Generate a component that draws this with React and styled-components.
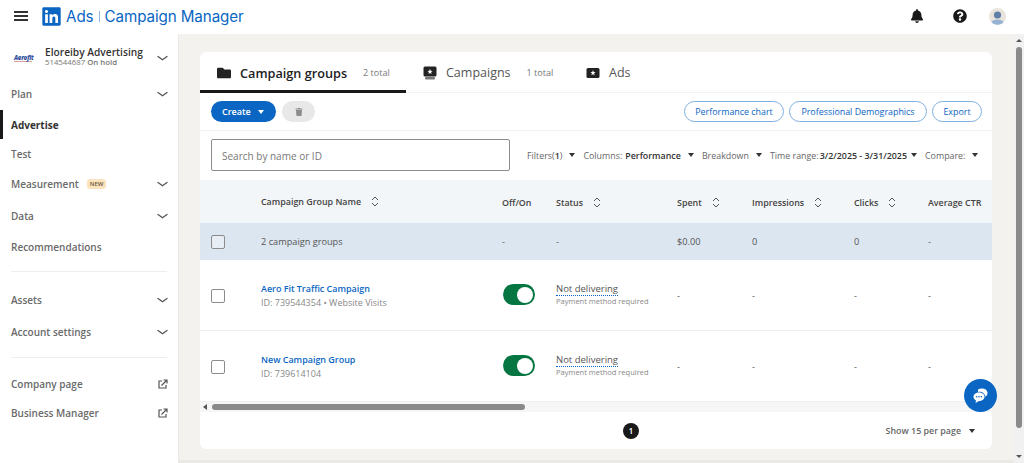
import React from 'react'
import styled, { createGlobalStyle } from 'styled-components'
import { FaLinkedin, FaFolder, FaBell, FaQuestionCircle, FaTrash } from 'react-icons/fa'

const GlobalStyle = createGlobalStyle`
  html, body { margin: 0; padding: 0; height: 100%; overflow: hidden; }
  body { font-family: "Open Sans", "Noto Sans", "Liberation Sans", sans-serif; color: #333; background: #f4f2ee; }
  * { box-sizing: border-box; }
`

const Page = styled.div`
  width: 1024px;
  height: 463px;
  display: flex;
  flex-direction: column;
  overflow: hidden;
`

const Header = styled.header`
  height: 34px;
  flex: none;
  background: #fff;
  display: flex;
  align-items: center;
  padding: 0 18px 2px 14px;
`

const Burger = styled.div`
  width: 14px;
  height: 10px;
  margin-right: 13px;
  border-top: 2px solid #333;
  border-bottom: 2px solid #333;
  display: flex;
  align-items: center;
  &::before { content: ''; width: 100%; height: 2px; background: #333; }
`

const Brand = styled.div`
  display: flex;
  align-items: center;
  color: #0a66c2;
  font-size: 15.2px;
  font-family: "Inter", "Open Sans", sans-serif;
  letter-spacing: -0.1px;
  svg { width: 21px; height: 21px; margin-right: 4px; }
`

const BrandBar = styled.span`
  width: 1px;
  height: 11px;
  background: #8db6e0;
  margin: 0 5px;
`

const HeaderIcons = styled.div`
  margin-left: auto;
  display: flex;
  align-items: center;
  gap: 22px;
  color: #191919;
  svg:first-child { margin-right: 7px; }
`

const Body = styled.div`
  flex: 1;
  min-height: 0;
  display: flex;
`

const Sidebar = styled.aside`
  width: 179px;
  flex: none;
  background: #fff;
  border-right: 1px solid #ebe9e5;
`

const Account = styled.div`
  height: 44px;
  display: flex;
  align-items: center;
  padding: 1px 10px 0 14px;
  > svg { margin-top: 4px; }
`

const AccountLogo = styled.span`
  width: 18px;
  font-size: 6px;
  font-weight: 800;
  font-style: italic;
  color: #30509c;
  margin: 4px 13px 0 0;
  letter-spacing: -0.2px;
  border-bottom: 1px solid #d8a0a0;
  line-height: 6px;
`

const AccountText = styled.div`
  flex: 1;
  min-width: 0;
`

const AccountName = styled.div`
  font-size: 10.2px;
  font-weight: 600;
  line-height: 12px;
  color: #333;
  white-space: nowrap;
`

const AccountMeta = styled.div`
  font-size: 7.8px;
  line-height: 9px;
  color: #777;
  b { font-weight: 600; }
`

const NavItem = styled.div`
  height: ${p => (p.$tall ? 32 : 29)}px;
  display: flex;
  align-items: center;
  padding: 0 10px 0 11px;
  font-size: 10px;
  font-weight: ${p => (p.$active ? 700 : 600)};
  color: ${p => (p.$active ? '#333' : '#6a6a6a')};
  box-shadow: ${p => (p.$active ? 'inset 3px 0 0 #191919' : 'none')};
  svg { margin-left: auto; }
`

const NavDivider = styled.hr`
  border: 0;
  border-top: 1px solid #eeeeee;
  margin: ${p => p.$before}px 11px ${p => p.$after}px;
`

const NewBadge = styled.span`
  margin-left: 8px;
  background: #fbe3bd;
  color: #6b5a3e;
  font-size: 6px;
  font-weight: 600;
  padding: 1px 3px;
  line-height: 8px;
  border-radius: 3px;
`

const Main = styled.main`
  flex: 1;
  min-width: 0;
  padding: 18px 22px 0 21px;
  border-bottom: 3px solid #ebe9e5;
`

const Card = styled.section`
  width: 792px;
  height: 397px;
  background: #fff;
  border-radius: 6px;
  overflow: hidden;
  display: flex;
  flex-direction: column;
`

const Tabs = styled.div`
  height: 41px;
  flex: none;
  display: flex;
  border-bottom: 1px solid #f2f2f2;
`

const Tab = styled.div`
  display: flex;
  align-items: center;
  height: 41px;
  width: ${p => p.$w}px;
  padding-left: ${p => p.$pad}px;
  padding-top: ${p => (p.$active ? 3 : 0)}px;
  font-size: ${p => (p.$active ? 12.7 : 12.5)}px;
  font-weight: ${p => (p.$active ? 600 : 400)};
  color: ${p => (p.$active ? '#222' : '#555')};
  border-bottom: ${p => (p.$active ? '3px solid #191919' : 'none')};
  svg { margin-right: 9px; color: #222; flex: none; }
`

const TabCount = styled.span`
  font-size: 9px;
  font-weight: 400;
  color: #777;
  margin-left: 16px;
`

const Toolbar = styled.div`
  height: 38px;
  flex: none;
  display: flex;
  align-items: center;
  padding: 0 10px 0 11px;
  gap: 6px;
  border-bottom: 1px solid #f2f2f2;
`

const CreateButton = styled.div`
  width: 65px;
  height: 21px;
  background: #0a66c2;
  color: #fff;
  border-radius: 11px;
  font-size: 9px;
  font-weight: 600;
  display: flex;
  align-items: center;
  padding-left: 11px;
  gap: 7px;
`

const TrashButton = styled.div`
  width: 33px;
  height: 21px;
  background: #e8e8e8;
  border-radius: 11px;
  color: #8c8c8c;
  display: flex;
  align-items: center;
  justify-content: center;
`

const OutlineRow = styled.div`
  margin-left: auto;
  display: flex;
  gap: 5px;
`

const OutlineButton = styled.div`
  width: ${p => p.$w}px;
  height: 21px;
  border: 1px solid #7fb0e0;
  border-radius: 11px;
  color: #0a66c2;
  font-size: 8.9px;
  font-weight: 500;
  display: flex;
  align-items: center;
  justify-content: center;
  white-space: nowrap;
`

const FilterRow = styled.div`
  height: 49px;
  flex: none;
  display: flex;
  align-items: center;
  padding: 0 0 1px 11px;
  white-space: nowrap;
`

const SearchBox = styled.div`
  width: 299px;
  height: 32px;
  flex: none;
  border: 1px solid #8c8c8c;
  border-radius: 2px;
  padding: 2px 0 0 10px;
  display: flex;
  align-items: center;
  font-size: 10px;
  color: #777;
  margin-right: 17px;
`

const Filter = styled.span`
  font-size: 8.9px;
  color: #666;
  display: inline-flex;
  align-items: center;
  margin-right: ${p => p.$after ?? 8}px;
  b { font-weight: 600; color: #333; margin-left: ${p => p.$bold ?? 3}px; }
`

const FilterCount = styled.span`
  font-weight: 600;
  color: #333;
`

const Caret = styled.span`
  width: 0;
  height: 0;
  margin-left: ${p => p.$gap ?? 7}px;
  border-left: 3.5px solid transparent;
  border-right: 3.5px solid transparent;
  border-top: 4px solid ${p => p.$color || '#333'};
`

const Row = styled.div`
  flex: none;
  height: ${p => p.$h}px;
  display: grid;
  grid-template-columns: 61px 241px 54px 121px 75px 102px 74px 64px;
  align-items: center;
  background: ${p => p.$bg || '#fff'};
  border-bottom: ${p => (p.$line ? '1px solid #f0f0f0' : 'none')};
  font-size: 9.2px;
  color: #555;
`

const HeadCell = styled.div`
  display: flex;
  align-items: center;
  font-weight: 600;
  color: #444;
  font-size: 8.9px;
  white-space: nowrap;
  padding-top: ${p => p.$drop || 0}px;
  svg { margin-left: 10px; }
`

const Check = styled.div`
  width: 14px;
  height: 14px;
  margin: 1px 0 0 11px;
  border: 1px solid #8c8c8c;
  border-radius: 2px;
  background: ${p => (p.$tint ? '#e6edf5' : '#fff')};
`

const NameCell = styled.div`
  padding-top: 1px;
`

const NameLink = styled.div`
  color: #0a66c2;
  font-weight: 600;
  font-size: 8.95px;
  line-height: 14px;
`

const SubLine = styled.div`
  color: #888;
  font-size: 9px;
  line-height: 14px;
`

const Toggle = styled.div`
  width: 32px;
  height: 21px;
  margin: -1px 0 0 1px;
  background: #057642;
  border-radius: 11px;
  display: flex;
  align-items: center;
  justify-content: flex-end;
  padding-right: 2px;
  &::after { content: ''; width: 16px; height: 16px; background: #fff; border-radius: 50%; }
`

const StatusLabel = styled.div`
  color: #555;
  font-weight: 500;
  font-size: 9.5px;
  line-height: 12px;
  width: fit-content;
  border-bottom: 1px dotted #0a66c2;
`

const StatusNote = styled.div`
  color: #888;
  font-size: 7.5px;
  line-height: 11px;
  white-space: nowrap;
`

const HScroll = styled.div`
  height: 10px;
  flex: none;
  background: #f6f6f6;
  display: flex;
  align-items: center;
  padding-left: 3px;
`

const ScrollArrowLeft = styled.span`
  width: 0;
  height: 0;
  border-top: 3px solid transparent;
  border-bottom: 3px solid transparent;
  border-right: 4px solid #555;
  margin-right: 5px;
`

const HThumb = styled.div`
  width: 313px;
  height: 6px;
  border-radius: 3px;
  background: #8a8a8a;
`

const Footer = styled.div`
  flex: 1;
  display: grid;
  grid-template-columns: 423px auto 1fr;
  align-items: center;
  padding: 0 17px 0 0;
`

const PageDot = styled.div`
  grid-column: 2;
  width: 16px;
  height: 16px;
  background: #191919;
  color: #fff;
  border-radius: 50%;
  font-size: 8.5px;
  font-weight: 600;
  display: flex;
  align-items: center;
  justify-content: center;
`

const PerPage = styled.div`
  justify-self: end;
  display: flex;
  align-items: center;
  font-size: 8.9px;
  font-weight: 600;
  color: #666;
`

const VScroll = styled.div`
  width: 10px;
  flex: none;
  background: #f1f1f1;
  display: flex;
  flex-direction: column;
  align-items: center;
  padding-top: 5px;
`

const VArrow = styled.span`
  width: 0;
  height: 0;
  border-left: 3px solid transparent;
  border-right: 3px solid transparent;
  ${p => (p.$down ? 'border-top: 3px solid #555;' : 'border-bottom: 3px solid #555;')}
`

const VThumb = styled.div`
  width: 6px;
  height: 381px;
  margin: 5px 0 27px;
  border-radius: 3px;
  background: #8a8a8a;
`

const ChatFab = styled.div`
  position: fixed;
  left: 964px;
  top: 379px;
  width: 33px;
  height: 33px;
  border-radius: 50%;
  background: #0a66c2;
  display: flex;
  align-items: center;
  justify-content: center;
`

const Chevron = () => (
  <svg width="11" height="7" viewBox="0 0 11 7" fill="none">
    <path d="M1 1.4 L5.5 4.8 L10 1.4" stroke="#555" strokeWidth="1.3" strokeLinecap="round" />
  </svg>
)

const Sort = () => (
  <svg width="8" height="11" viewBox="0 0 8 11" fill="none">
    <path d="M1 4 L4 1 L7 4 M1 7 L4 10 L7 7" stroke="#555" strokeWidth="1" />
  </svg>
)

const External = () => (
  <svg width="10" height="10" viewBox="0 0 10 10" fill="none">
    <path d="M4 2 H1 V9 H8 V6" stroke="#555" strokeWidth="1.2" />
    <path d="M3.5 6.5 L8.5 1.5 M5.5 1 H9 V4.5" stroke="#555" strokeWidth="1.2" />
  </svg>
)

const CampaignIcon = () => (
  <svg width="14" height="14" viewBox="0 0 14 14">
    <rect x="0.5" y="0.5" width="13" height="10" rx="1.5" fill="#222" />
    <rect x="2" y="11" width="10" height="2.5" rx="1" fill="#777" />
    <path d="M7 2.8 L7.7 4.7 L9.6 4.9 L8.1 6.1 L8.6 8 L7 7 L5.4 8 L5.9 6.1 L4.4 4.9 L6.3 4.7 Z" fill="#fff" />
  </svg>
)

const AdIcon = () => (
  <svg width="14" height="12" viewBox="0 0 14 12">
    <rect x="0.5" y="1" width="13" height="10" rx="1.5" fill="#222" />
    <path d="M7 3 L7.7 4.9 L9.6 5.1 L8.1 6.3 L8.6 8.2 L7 7.2 L5.4 8.2 L5.9 6.3 L4.4 5.1 L6.3 4.9 Z" fill="#fff" />
  </svg>
)

const Avatar = () => (
  <svg width="17" height="17" viewBox="0 0 17 17">
    <circle cx="8.5" cy="8.5" r="8.5" fill="#e8e3dc" />
    <circle cx="8.5" cy="7" r="3.6" fill="#5f7fa6" />
    <path d="M2.5 14 C4 10.5 13 10.5 14.5 14 C12 17.5 5 17.5 2.5 14 Z" fill="#95b3d2" />
  </svg>
)

const ChatIcon = () => (
  <svg width="17" height="16" viewBox="0 0 17 16">
    <path d="M6 1.5 C9 -0.5 15.5 0.5 15.5 5 C15.5 6.8 14.6 8 13.4 8.8 C13 5 9 2.8 6 4 Z" fill="#fff" />
    <path d="M7 4.5 C10 4.5 12.5 6.2 12.5 8.8 C12.5 11.4 10 13 7 13 L3.5 15 L4 12.4 C2.4 11.6 1.5 10.4 1.5 8.8 C1.5 6.2 4 4.5 7 4.5 Z" fill="#fff" />
    <circle cx="4.6" cy="8.8" r="0.8" fill="#0a66c2" />
    <circle cx="7" cy="8.8" r="0.8" fill="#0a66c2" />
    <circle cx="9.4" cy="8.8" r="0.8" fill="#0a66c2" />
  </svg>
)

const rows = [
  { name: 'Aero Fit Traffic Campaign', sub: 'ID: 739544354 • Website Visits' },
  { name: 'New Campaign Group', sub: 'ID: 739614104' },
]

export default function App() {
  return (
    <Page>
      <GlobalStyle />
      <Header>
        <Burger />
        <Brand>
          <FaLinkedin />
          Ads<BrandBar />Campaign Manager
        </Brand>
        <HeaderIcons>
          <FaBell size={14} />
          <FaQuestionCircle size={14} />
          <Avatar />
        </HeaderIcons>
      </Header>
      <Body>
        <Sidebar>
          <Account>
            <AccountLogo>Aerofit</AccountLogo>
            <AccountText>
              <AccountName>Eloreiby Advertising</AccountName>
              <AccountMeta>514544687 <b>On hold</b></AccountMeta>
            </AccountText>
            <Chevron />
          </Account>
          <nav>
            <NavItem $tall>Plan<Chevron /></NavItem>
            <NavItem $active>Advertise</NavItem>
            <NavItem>Test</NavItem>
            <NavItem $tall>Measurement<NewBadge>NEW</NewBadge><Chevron /></NavItem>
            <NavItem $tall>Data<Chevron /></NavItem>
            <NavItem>Recommendations</NavItem>
            <NavDivider $before={10} $after={12} />
            <NavItem $tall>Assets<Chevron /></NavItem>
            <NavItem $tall>Account settings<Chevron /></NavItem>
            <NavDivider $before={9} $after={11} />
            <NavItem>Company page<External /></NavItem>
            <NavItem>Business Manager<External /></NavItem>
          </nav>
        </Sidebar>
        <Main>
          <Card>
            <Tabs>
              <Tab $active $w={206} $pad={17}><FaFolder size={14} />Campaign groups<TabCount>2 total</TabCount></Tab>
              <Tab $w={180} $pad={17}><CampaignIcon />Campaigns<TabCount>1 total</TabCount></Tab>
              <Tab $w={100} $pad={0}><AdIcon />Ads</Tab>
            </Tabs>
            <Toolbar>
              <CreateButton>Create<Caret $color="#fff" $gap={0} /></CreateButton>
              <TrashButton><FaTrash size={8} /></TrashButton>
              <OutlineRow>
                <OutlineButton $w={100}>Performance chart</OutlineButton>
                <OutlineButton $w={138}>Professional Demographics</OutlineButton>
                <OutlineButton $w={50}>Export</OutlineButton>
              </OutlineRow>
            </Toolbar>
            <FilterRow>
              <SearchBox>Search by name or ID</SearchBox>
              <Filter>Filters(<FilterCount>1</FilterCount>)<Caret /></Filter>
              <Filter>Columns:<b>Performance</b><Caret /></Filter>
              <Filter>Breakdown<Caret /></Filter>
              <Filter $bold={1}>Time range:<b>3/2/2025 - 3/31/2025</b><Caret $gap={4} /></Filter>
              <Filter>Compare:<Caret /></Filter>
            </FilterRow>
            <Row $h={43} $bg="#f3f6f8">
              <span />
              <HeadCell>Campaign Group Name<Sort /></HeadCell>
              <HeadCell $drop={1}>Off/On</HeadCell>
              <HeadCell $drop={1}>Status<Sort /></HeadCell>
              <HeadCell $drop={1}>Spent<Sort /></HeadCell>
              <HeadCell $drop={1}>Impressions<Sort /></HeadCell>
              <HeadCell $drop={1}>Clicks<Sort /></HeadCell>
              <HeadCell $drop={1}>Average CTR</HeadCell>
            </Row>
            <Row $h={37} $bg="#dce6f1">
              <Check $tint />
              <div>2 campaign groups</div>
              <div>-</div>
              <div>-</div>
              <div>$0.00</div>
              <div>0</div>
              <div>0</div>
              <div>-</div>
            </Row>
            {rows.map(row => (
              <Row key={row.name} $h={71} $line>
                <Check />
                <NameCell>
                  <NameLink>{row.name}</NameLink>
                  <SubLine>{row.sub}</SubLine>
                </NameCell>
                <Toggle />
                <div>
                  <StatusLabel>Not delivering</StatusLabel>
                  <StatusNote>Payment method required</StatusNote>
                </div>
                <div>-</div>
                <div>-</div>
                <div>-</div>
                <div>-</div>
              </Row>
            ))}
            <HScroll><ScrollArrowLeft /><HThumb /></HScroll>
            <Footer>
              <PageDot>1</PageDot>
              <PerPage>Show 15 per page<Caret $gap={8} /></PerPage>
            </Footer>
          </Card>
        </Main>
        <VScroll>
          <VArrow />
          <VThumb />
          <VArrow $down />
        </VScroll>
      </Body>
      <ChatFab><ChatIcon /></ChatFab>
    </Page>
  )
}
